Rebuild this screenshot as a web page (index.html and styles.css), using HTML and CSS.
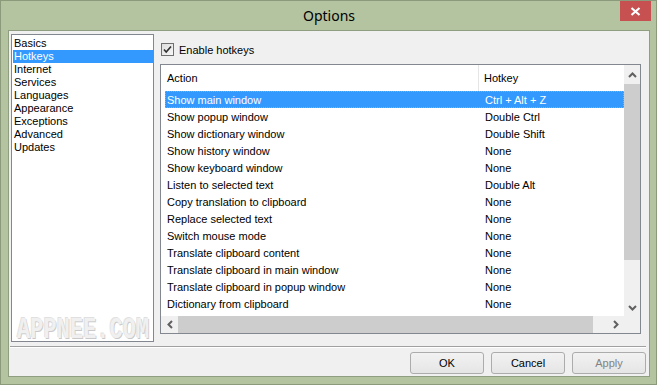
FILE: index.html
```html
<!DOCTYPE html>
<html>
<head>
<meta charset="utf-8">
<link rel="stylesheet" href="styles.css">
</head>
<body>
<div class="window">
  <div class="titlebar">
    <div></div>
    <div class="title">Options</div>
    <div class="close"><svg width="11" height="9" viewBox="0 0 11 9"><path d="M1.5 1 L9.5 8 M9.5 1 L1.5 8" stroke="#fff" stroke-width="2.2" fill="none"/></svg></div>
  </div>
  <div class="client">
    <div class="main">
      <div class="list">
        <div class="item">Basics</div>
        <div class="item sel">Hotkeys</div>
        <div class="item">Internet</div>
        <div class="item">Services</div>
        <div class="item">Languages</div>
        <div class="item">Appearance</div>
        <div class="item">Exceptions</div>
        <div class="item">Advanced</div>
        <div class="item">Updates</div>
        <div class="watermark">APPNEE.COM</div>
      </div>
      <div class="right">
        <label class="check">
          <svg class="box" width="13" height="13" viewBox="0 0 13 13">
            <defs><linearGradient id="cg" x1="0" y1="0" x2="1" y2="1"><stop offset="0" stop-color="#dcdcdc"/><stop offset="1" stop-color="#f8f8f8"/></linearGradient></defs>
            <rect x="0.5" y="0.5" width="12" height="12" fill="url(#cg)" stroke="#707070"/>
            <path d="M3 6.5 L5.2 9 L10 3.5" stroke="#303030" stroke-width="1.6" fill="none"/>
          </svg>
          <span>Enable hotkeys</span>
        </label>
        <div class="lv">
          <div class="content">
            <div class="header">
              <div class="hcell c1">Action</div>
              <div class="hcell c2">Hotkey</div>
            </div>
            <div class="row sel"><div class="c1">Show main window</div><div class="c2">Ctrl + Alt + Z</div></div>
            <div class="row"><div class="c1">Show popup window</div><div class="c2">Double Ctrl</div></div>
            <div class="row"><div class="c1">Show dictionary window</div><div class="c2">Double Shift</div></div>
            <div class="row"><div class="c1">Show history window</div><div class="c2">None</div></div>
            <div class="row"><div class="c1">Show keyboard window</div><div class="c2">None</div></div>
            <div class="row"><div class="c1">Listen to selected text</div><div class="c2">Double Alt</div></div>
            <div class="row"><div class="c1">Copy translation to clipboard</div><div class="c2">None</div></div>
            <div class="row"><div class="c1">Replace selected text</div><div class="c2">None</div></div>
            <div class="row"><div class="c1">Switch mouse mode</div><div class="c2">None</div></div>
            <div class="row"><div class="c1">Translate clipboard content</div><div class="c2">None</div></div>
            <div class="row"><div class="c1">Translate clipboard in main window</div><div class="c2">None</div></div>
            <div class="row"><div class="c1">Translate clipboard in popup window</div><div class="c2">None</div></div>
            <div class="row"><div class="c1">Dictionary from clipboard</div><div class="c2">None</div></div>
          </div>
          <div class="vscroll">
            <div class="sbtn up"><svg width="9" height="6" viewBox="0 0 9 6"><path d="M1 5 L4.5 1.5 L8 5" stroke="#606060" stroke-width="2" fill="none"/></svg></div>
            <div class="vtrack"><div class="vthumb"></div></div>
            <div class="sbtn down"><svg width="9" height="6" viewBox="0 0 9 6"><path d="M1 1 L4.5 4.5 L8 1" stroke="#606060" stroke-width="2" fill="none"/></svg></div>
          </div>
          <div class="hscroll">
            <div class="hbtn left"><svg width="6" height="9" viewBox="0 0 6 9"><path d="M5 1 L1.5 4.5 L5 8" stroke="#606060" stroke-width="2" fill="none"/></svg></div>
            <div class="htrack"><div class="hthumb"></div></div>
            <div class="hbtn right"><svg width="6" height="9" viewBox="0 0 6 9"><path d="M1 1 L4.5 4.5 L1 8" stroke="#606060" stroke-width="2" fill="none"/></svg></div>
          </div>
          <div class="corner"></div>
        </div>
      </div>
    </div>
    <div class="sep"></div>
    <div class="buttons">
      <button class="btn">OK</button>
      <button class="btn">Cancel</button>
      <button class="btn disabled">Apply</button>
    </div>
  </div>
</div>
</body>
</html>
```

FILE: styles.css
```css
html, body {
  margin: 0;
  padding: 0;
}
body {
  width: 657px;
  height: 385px;
  overflow: hidden;
  font-family: "Liberation Sans", Arial, sans-serif;
  font-size: 11px;
  color: #000;
}
.window {
  box-sizing: border-box;
  width: 657px;
  height: 385px;
  border: 1px solid #8a9a7a;
  background: #b4c3a0;
  padding: 0 6px 7px 7px;
  display: flex;
  flex-direction: column;
}
.titlebar {
  height: 29px;
  display: grid;
  grid-template-columns: 1fr auto 1fr;
  align-items: start;
}
.title {
  font-family: "Noto Sans", sans-serif;
  font-size: 14px;
  line-height: 29px;
  color: #000;
}
.close {
  justify-self: end;
  margin-right: -1px;
  width: 31px;
  height: 20px;
  background: #c75050;
  display: flex;
  align-items: center;
  justify-content: center;
}
.client {
  flex: 1;
  border: 1px solid #8f9e80;
  background: #f0f0f0;
  padding: 3px 3px 0 2px;
  display: flex;
  flex-direction: column;
}
.main {
  display: flex;
  gap: 6px;
  height: 308px;
}
.list {
  position: relative;
  box-sizing: border-box;
  width: 143px;
  height: 308px;
  border: 1px solid #828790;
  background: #fff;
  padding: 2px 0 0 1px;
}
.item {
  height: 13px;
  line-height: 13px;
  padding-left: 1px;
  white-space: nowrap;
}
.item.sel {
  background: #3399ff;
  color: #fff;
}
.watermark {
  position: absolute;
  left: 5px;
  top: 281px;
  font-family: "Liberation Mono", monospace;
  font-weight: bold;
  font-size: 29px;
  line-height: 30px;
  transform: scaleX(0.76);
  transform-origin: left top;
  color: #f0f0f0;
  text-shadow: 1px 1px 0 #c9c9c9, -1px -1px 0 #e0e0e0;
  white-space: nowrap;
}
.right {
  display: flex;
  flex-direction: column;
}
.check {
  display: flex;
  align-items: center;
  gap: 5px;
  margin-top: 9px;
  margin-left: 1px;
  height: 13px;
}
.box {
  display: block;
}
.lv {
  margin-top: 8px;
  box-sizing: border-box;
  width: 481px;
  height: 270px;
  border: 1px solid #828790;
  background: #fff;
  display: grid;
  grid-template-columns: 463px 16px;
  grid-template-rows: 251px 17px;
}
.content {
  overflow: hidden;
}
.header {
  height: 26px;
  display: flex;
  align-items: stretch;
}
.hcell {
  display: flex;
  align-items: center;
}
.hcell.c1 {
  box-sizing: border-box;
  width: 318px;
  padding-left: 6px;
  border-right: 1px solid #e5e5e5;
}
.hcell.c2 {
  padding-left: 5px;
}
.row {
  box-sizing: border-box;
  display: flex;
  height: 17px;
  line-height: 15px;
  padding-top: 1px;
  margin-left: 4px;
  border: 1px solid transparent;
  white-space: nowrap;
}
.row .c1 {
  width: 312px;
  padding-left: 1px;
}
.row .c2 {
  padding-left: 6px;
}
.row.sel {
  background: #3399ff;
  color: #fff;
  border: 1px dotted #e0a050;
}
.vscroll {
  background: #f0f0f0;
  display: flex;
  flex-direction: column;
}
.sbtn {
  display: flex;
  align-items: center;
  justify-content: center;
}
.sbtn.up {
  height: 19px;
}
.sbtn.down {
  height: 17px;
}
.vtrack {
  flex: 1;
}
.vthumb {
  height: 176px;
  background: #cdcdcd;
}
.hscroll {
  background: #f0f0f0;
  display: flex;
}
.hbtn {
  width: 17px;
  display: flex;
  align-items: center;
  justify-content: center;
}
.htrack {
  flex: 1;
}
.hthumb {
  width: 415px;
  height: 100%;
  background: #cdcdcd;
}
.corner {
  background: #f0f0f0;
}
.sep {
  margin: 4px 0 0 -1px;
  height: 0;
  border-top: 1px solid #a0a0a0;
  border-bottom: 1px solid #ffffff;
}
.buttons {
  display: flex;
  justify-content: flex-end;
  gap: 7px;
  margin-top: 4px;
}
.btn {
  box-sizing: border-box;
  width: 74px;
  height: 22px;
  border: 1px solid #acacac;
  border-radius: 3px;
  background: linear-gradient(#f2f2f2, #e5e5e5);
  font-family: "Liberation Sans", Arial, sans-serif;
  font-size: 11px;
  color: #000;
  padding: 0;
}
.btn.disabled {
  color: #838383;
}
```
